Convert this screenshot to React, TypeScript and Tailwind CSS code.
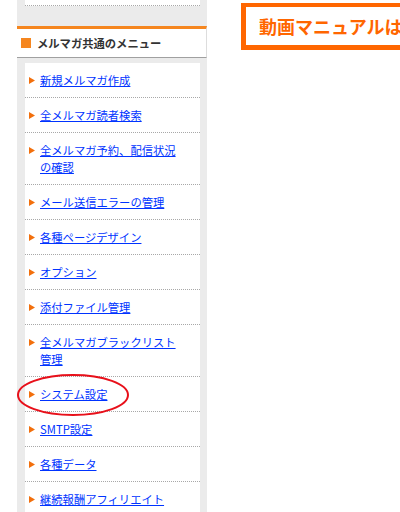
import React from "react";

const items: string[] = [
  "新規メルマガ作成",
  "全メルマガ読者検索",
  "全メルマガ予約、配信状況の確認",
  "メール送信エラーの管理",
  "各種ページデザイン",
  "オプション",
  "添付ファイル管理",
  "全メルマガブラックリスト管理",
  "システム設定",
  "SMTP設定",
  "各種データ",
  "継続報酬アフィリエイト",
];

export default function App() {
  return (
    <div
      className="relative w-[400px] h-[512px] overflow-hidden bg-white flex"
      style={{ fontFamily: '"Noto Sans CJK JP", "Noto Sans", sans-serif' }}
    >
      <div className="ml-[17px] w-[190px] shrink-0 bg-[#ebebeb] flex flex-col">
        <div className="shrink-0 ml-[8px] mr-[7px] h-[6px] bg-white border-b border-dotted border-[#a8a8a8]" />
        <div className="shrink-0 mt-[20px] border-t-[3px] border-[#f5861f] bg-white h-[32px] border-b border-b-[#a0a0a0] border-r border-r-[#dddddd] flex items-center">
          <span className="ml-[4px] w-[10px] h-[10px] bg-[#f5861f]" />
          <span className="ml-[6px] text-[11.3px] leading-[17px] font-bold text-[#333333]">
            メルマガ共通のメニュー
          </span>
        </div>
        <ul className="shrink-0 mt-[5px] ml-[8px] mr-[7px] bg-white">
          {items.map((t) => (
            <li
              key={t}
              className="flex items-start pt-[9px] pb-[8px] border-b border-dotted border-[#a8a8a8]"
            >
              <span className="ml-[4px] w-[6px] h-[17px] flex items-center shrink-0">
                <svg width="6" height="7" viewBox="0 0 6 7">
                  <polygon points="0,0 6,3.5 0,7" fill="#f26f0c" />
                </svg>
              </span>
              <a
                href="#"
                className="ml-[5px] w-[140px] text-[11.3px] leading-[17px] text-[#0033ff] underline"
              >
                {t}
              </a>
            </li>
          ))}
        </ul>
      </div>
      <div className="ml-[34px] mt-[3px] shrink-0">
        <div className="h-[47px] border-[5px] border-t-4 border-[#ff6600] bg-white flex items-center pl-[13px] pr-[20px] w-[300px]">
          <span className="text-[18px] font-bold text-[#ff6600] whitespace-nowrap leading-none">
            動画マニュアルはこちら
          </span>
        </div>
      </div>
      <svg
        className="absolute left-[16px] top-[373px]"
        width="114"
        height="44"
        viewBox="0 0 114 44"
      >
        <ellipse
          cx="57"
          cy="22"
          rx="55"
          ry="20"
          fill="none"
          stroke="#e8101a"
          strokeWidth="2"
        />
      </svg>
    </div>
  );
}
